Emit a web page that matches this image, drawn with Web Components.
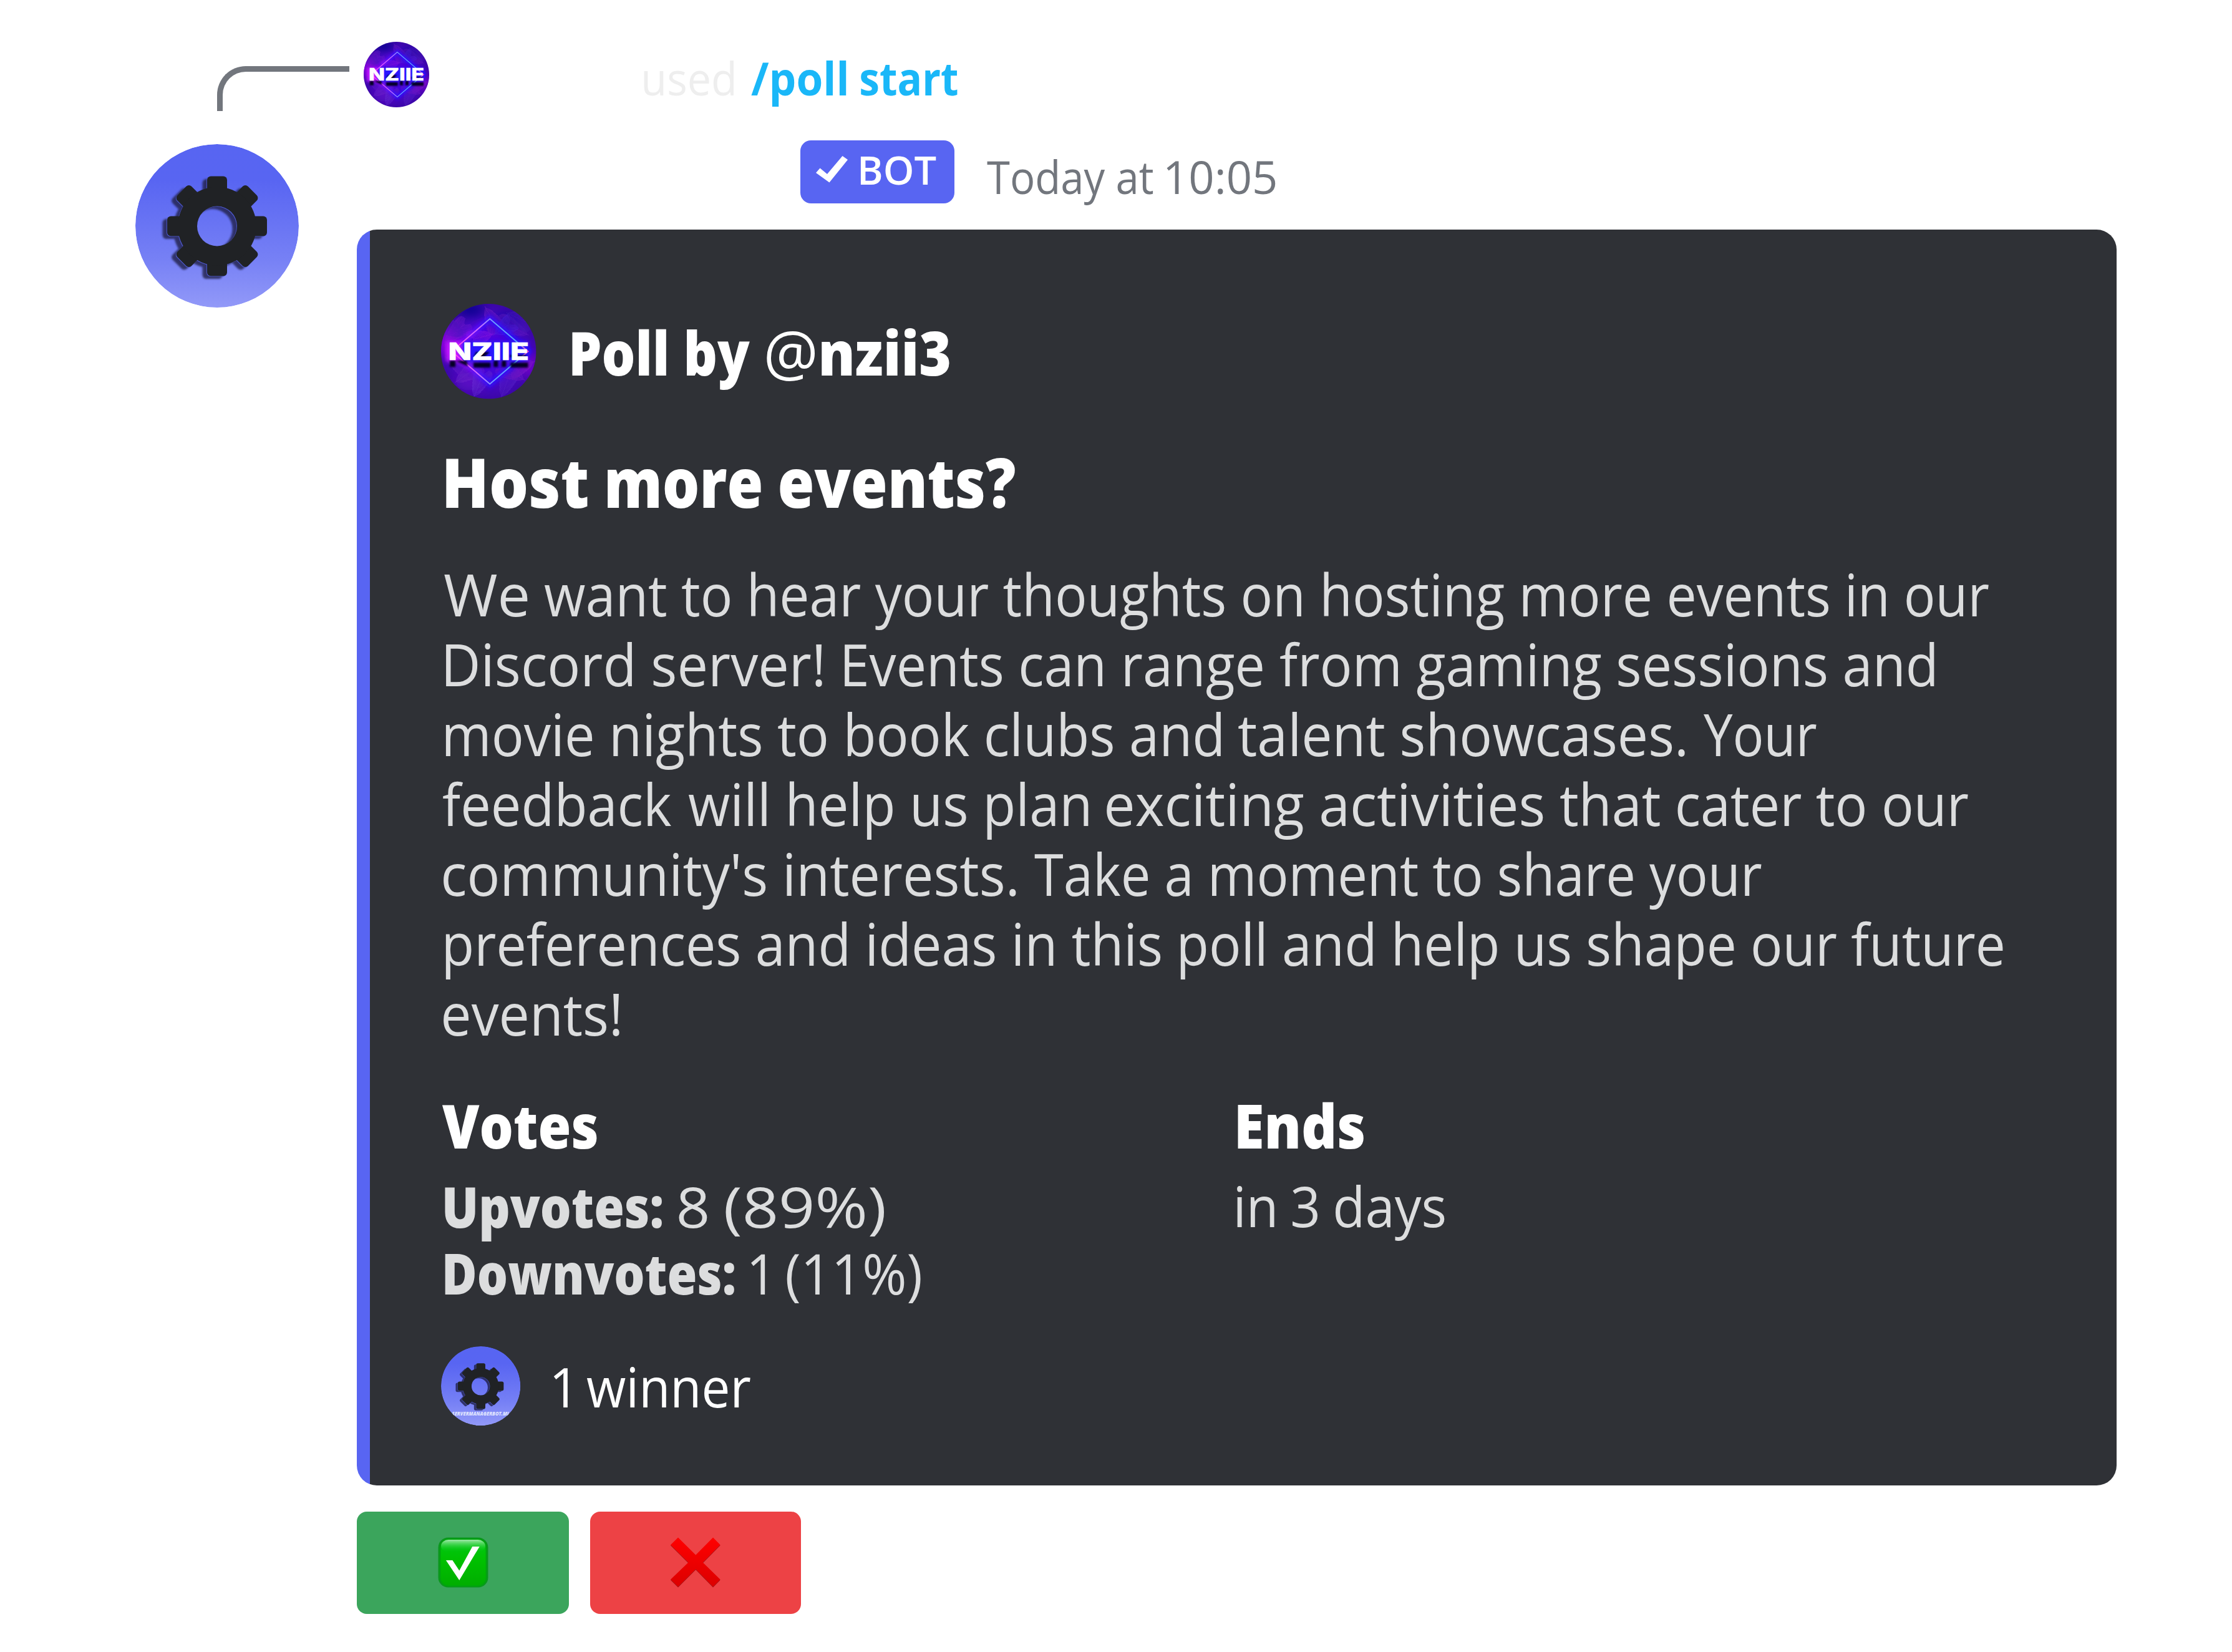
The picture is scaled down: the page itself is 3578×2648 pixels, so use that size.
<!DOCTYPE html>
<html lang="en">
<head>
<meta charset="utf-8">
<title>Poll message</title>
<style>
html,body{margin:0;padding:0;background:#fff}
body{width:3578px;height:2648px;overflow:hidden;font-family:"Open Sans","Noto Sans",sans-serif}
</style>
</head>
<body>
<poll-message></poll-message>
<script>
const meter = document.createElement('canvas').getContext('2d');

/* One line of text whose ink spans exactly `w` pixels; the baseline sits at `size` by default.
   "|" divides the line into runs; `cuts` lists "end,start" pairs for each division.
   A run that starts with "~" is drawn in the regular weight. */
class FitText extends HTMLElement {
  connectedCallback() {
    const size = +this.getAttribute('size'), w = +this.getAttribute('w');
    const base = this.getAttribute('weight') || '400';
    const lh = +(this.getAttribute('lh') || size * 1.224);
    const cuts = (this.getAttribute('cuts') || '').split(',').filter(Boolean).map(Number);
    const edges = [0, ...cuts, w];
    const runs = this.textContent.trim().split('|');
    let spans = '', cursor = 0;
    runs.forEach((raw, i) => {
      const weight = raw[0] === '~' ? '400' : base;
      const text = raw.replace('~', '').trimEnd();
      const from = edges[i * 2], to = edges[i * 2 + 1];
      meter.font = `${weight} ${size}px "Open Sans","Noto Sans",sans-serif`;
      const m = meter.measureText(text);
      const k = (to - from) / (m.actualBoundingBoxLeft + m.actualBoundingBoxRight);
      spans += `<span class="run" style="width:${to - from}px;margin-left:${from - cursor}px"><span style="font-weight:${weight};transform:translateX(${m.actualBoundingBoxLeft * k}px) scaleX(${k})">${text}</span></span>${raw.endsWith(' ') ? ' ' : ''}`;
      cursor = to;
    });
    this.attachShadow({mode: 'open'}).innerHTML = `<style>
      :host{display:block;flex:none;width:${w}px;height:${lh}px;white-space:pre;font-size:0;line-height:0;
        margin-left:${this.getAttribute('x') || 0}px;margin-top:${this.getAttribute('y') || 0}px}
      .run{display:inline-block;vertical-align:top;height:${lh}px}
      .run span{display:inline-block;font-size:${size}px;line-height:${lh}px;transform-origin:0 0}
    </style>${spans}`;
  }
}
customElements.define('fit-text', FitText);

class GearAvatar extends HTMLElement {
  connectedCallback() {
    const size = this.getAttribute('size'), k = +this.getAttribute('scale') || 1;
    let teeth = '';
    for (let a = 0; a < 360; a += 45)
      teeth += `<rect x="-16" y="-80" width="32" height="36" rx="6" transform="rotate(${a})"/>`;
    const gear = `${teeth}<path fill-rule="evenodd" d="M0-63A63 63 0 1 1 0 63A63 63 0 1 1 0-63ZM0-32A32 32 0 1 0 0 32A32 32 0 1 0 0-32Z"/>`;
    const label = this.hasAttribute('label')
      ? `<text x="36" y="228" textLength="190" lengthAdjust="spacingAndGlyphs" font-size="17" font-weight="800" font-style="italic" fill="#dfe3ff">${this.getAttribute('label')}</text>` : '';
    this.attachShadow({mode: 'open'}).innerHTML = `<style>
      :host{display:block;flex:none;width:${size}px;height:${size}px;margin-top:${this.getAttribute('y') || 0}px}
      svg{display:block;width:100%;height:100%}</style>
      <svg viewBox="0 0 262 262"><defs>
        <linearGradient id="g" x1="0" y1="0" x2="0" y2="1"><stop offset="0" stop-color="#5765f2"/><stop offset=".22" stop-color="#5865f2"/><stop offset=".7" stop-color="#7680f5"/><stop offset="1" stop-color="#9299f8"/></linearGradient>
        <filter id="b" x="-20%" y="-20%" width="140%" height="140%"><feGaussianBlur stdDeviation="1.6"/></filter>
        <clipPath id="c"><circle cx="131" cy="131" r="131"/></clipPath></defs>
        <g clip-path="url(#c)"><circle cx="131" cy="131" r="131" fill="url(#g)"/>
        <g transform="translate(131 131.5) scale(${k})">
          <g transform="translate(-7.5 4.5)" fill="#20244c" opacity=".82" filter="url(#b)">${gear}</g>
          <g transform="translate(-.8 .8)" fill="#4f5cd6">${gear}</g>
          <g fill="#202225">${gear}</g></g>${label}</g></svg>`;
  }
}
customElements.define('gear-avatar', GearAvatar);

class NeonAvatar extends HTMLElement {
  connectedCallback() {
    const size = this.getAttribute('size');
    const frond = (x, y, rot, len, colour) => {
      let d = '';
      for (let i = 3; i < len; i += 2.6) {
        const s = 17 * Math.sin(Math.PI * (i + 4) / (len + 8)) + 3;
        d += `M${i} 0q${s * .4} ${-s * .45} ${s} ${-s * .75}M${i} 0q${s * .4} ${s * .45} ${s} ${s * .75}`;
      }
      return `<path d="M0 0H${len}${d}" transform="translate(${x} ${y}) rotate(${rot})" stroke="${colour}" fill="none" stroke-width="1.1"/>`;
    };
    const fronds = frond(5,62,-42,44,'#7a1fd0') + frond(38,52,-150,36,'#5a1bc4') + frond(70,4,62,40,'#7d22c8')
      + frond(140,50,-155,50,'#6a20c0') + frond(84,48,165,34,'#a020e0') + frond(84,50,-35,30,'#5a2be0') + frond(6,84,30,40,'#6a1ec8')
      + frond(22,126,-35,44,'#7428cc') + frond(52,150,-68,42,'#6b35d8') + frond(96,150,-70,42,'#5b27c8')
      + frond(134,122,-150,42,'#7a1fc8') + frond(150,92,160,36,'#8a20c8') + frond(104,14,25,38,'#4a20b8');
    this.attachShadow({mode: 'open'}).innerHTML = `<style>
      :host{display:block;flex:none;width:${size}px;height:${size}px;margin-left:${this.getAttribute('x') || 0}px;margin-top:${this.getAttribute('y') || 0}px}
      svg{display:block;width:100%;height:100%}</style>
      <svg viewBox="0 0 152 152"><defs>
        <clipPath id="c"><circle cx="76" cy="76" r="76"/></clipPath>
        <radialGradient id="bg"><stop offset="0" stop-color="#3a00e8"/><stop offset=".6" stop-color="#4a08cc"/><stop offset="1" stop-color="#3c06a8"/></radialGradient>
        <linearGradient id="ln" x1="0" x2="1" y1="0" y2="0"><stop offset="0" stop-color="#ff3cf0"/><stop offset=".38" stop-color="#c870ff"/><stop offset=".55" stop-color="#6c9cff"/><stop offset=".85" stop-color="#5aa0ff"/><stop offset="1" stop-color="#ff50c8"/></linearGradient>
        <linearGradient id="gl" x1="0" x2="1" y1="0" y2="0"><stop offset="0" stop-color="#d000ff"/><stop offset=".45" stop-color="#3010ff"/><stop offset="1" stop-color="#1c10ff"/></linearGradient>
        <filter id="b1" x="-30%" y="-60%" width="160%" height="220%"><feGaussianBlur stdDeviation="1.4"/></filter>
        <filter id="b2" x="-30%" y="-60%" width="160%" height="220%"><feGaussianBlur stdDeviation="3.2"/></filter>
        <filter id="b3" x="-60%" y="-60%" width="220%" height="220%"><feGaussianBlur stdDeviation="9"/></filter></defs>
        <g clip-path="url(#c)">
          <rect width="152" height="152" fill="url(#bg)"/>
          <g filter="url(#b3)"><ellipse cx="48" cy="10" rx="22" ry="9" fill="#00008c"/><ellipse cx="104" cy="30" rx="18" ry="12" fill="#0a00a0"/><ellipse cx="10" cy="62" rx="16" ry="24" fill="#8c00e0"/><ellipse cx="140" cy="96" rx="12" ry="22" fill="#7800cc"/><ellipse cx="46" cy="124" rx="24" ry="14" fill="#5c10c4"/><ellipse cx="80" cy="50" rx="26" ry="14" fill="#5000dc"/></g>
          <g opacity=".5">${fronds}</g>
          <path d="M78 24L17 76L78 128L139 76Z" fill="none" stroke="url(#gl)" stroke-width="11" opacity=".8" filter="url(#b2)"/>
          <g filter="url(#b2)"><rect x="12" y="60" width="128" height="32" fill="#2a18ff"/><rect x="8" y="60" width="24" height="32" fill="#c018ff"/></g>
          <path d="M78 24L17 76L78 128L139 76Z" fill="none" stroke="url(#ln)" stroke-width="2"/>
          <g fill="#05031c" opacity=".95" filter="url(#b1)"><path d="M14 91h9v10h-9zM23 91l18 0 2 9zM52 94h27v8h-27zM84 91h7v10h-7zM97 91h7v10h-7zM111 94h28v8h-28zM56 77h22l-10 9h-16zM110 82h26v3h-26z"/></g>
          <text x="11.5" y="90" textLength="129" lengthAdjust="spacingAndGlyphs" font-size="38.5" font-family="Inter,sans-serif" font-weight="800" fill="#fff" stroke="#fff" stroke-width=".6">NZIIE</text>
        </g></svg>`;
  }
}
customElements.define('neon-avatar', NeonAvatar);

class BotTag extends HTMLElement {
  connectedCallback() {
    this.attachShadow({mode: 'open'}).innerHTML = `<style>
      :host{display:flex;flex:none;box-sizing:border-box;width:247px;height:101px;padding-left:25.5px;background:#5865f2;border-radius:17px;color:#fff}
      svg{display:block;flex:none;width:51px;height:43px;margin-top:25px}</style>
      <svg viewBox="0 0 51 43"><path d="M0 27L6.5 19.5L18 29L42.5 0L51 6L21.5 42.5Z" fill="#fff"/></svg><slot></slot>`;
  }
}
customElements.define('bot-tag', BotTag);

class ReplyLine extends HTMLElement {
  connectedCallback() {
    this.attachShadow({mode: 'open'}).innerHTML = `<style>
      :host{display:flex;height:225px;padding-left:348px}
      .spine{box-sizing:border-box;flex:none;width:212px;height:72px;margin-top:106.3px;border:solid #72767d;border-width:9px 0 0 9px;border-top-left-radius:46px}
      .used{color:#eee}.cmd{color:#1ab7f8}</style>
      <div class="spine"></div><neon-avatar size="105" x="23" y="66.7"></neon-avatar>
      <fit-text class="used" size="73" w="144.5" x="343.5" y="80">used</fit-text>
      <fit-text class="cmd" size="73" weight="700" w="331" x="28" y="80" cuts="152.5,176">/poll |start</fit-text>`;
  }
}
customElements.define('reply-line', ReplyLine);

class PollEmbed extends HTMLElement {
  connectedCallback() {
    /* left edge, right edge, text, division edges */
    const lines = [
      [712, 3188, 'We |want to hear your thoughts on hosting more events |in our', [846, 873, 2932, 2963]],
      [715, 3100.4, 'Discord server! |Events can range |from gaming sessions and', [1318, 1354, 2024, 2052]],
      [714, 2911.8, 'movie nights to book clubs and |talent showcases. |Your', [1957, 1985, 2701, 2731]],
      [710, 3155, 'feedback |will help us plan |exciting activities |that cater to our', [1076.7, 1104, 1745, 1774, 2474, 2501]],
      [711.3, 2823.7, "community's interests. |Take a moment to share your", [1629, 1658]],
      [714, 3211, 'preferences and ideas in this |poll and help us shape our future', [1861, 1892]],
      [711.3, 993.3, 'events!', []]];
    this.attachShadow({mode: 'open'}).innerHTML = `<style>
      :host{display:flex;flex-direction:column;box-sizing:border-box;width:2821px;height:2012.7px;padding:119px 0 0 134.9px;border-radius:32px;
        background:linear-gradient(90deg,#5865f2 21px,#2f3136 21px);color:#fff}
      .row{display:flex}.body,.values{color:#dcddde}.body{margin-top:57px}
      .fields{display:grid;grid-template-columns:1275.3px 1fr;margin-top:63.7px}
      .footer{display:flex;margin-top:63.4px}</style>
      <div class="row"><neon-avatar size="152.5"></neon-avatar><fit-text size="98" weight="800" w="605" x="57" y="18.3" cuts="285,312,390,400">Poll by |~@|nzii3</fit-text></div>
      <fit-text size="110" weight="800" w="912" x="7.6" y="64.4" cuts="227,259,505,535">Host |more |events?</fit-text>
      <div class="body">${lines.map(([l, r, t, c]) => `<fit-text size="93" lh="112" w="${r - l}" x="${l - 707.4}" cuts="${c.map(v => v - l)}">${t}</fit-text>`).join('')}</div>
      <div class="fields">
        <section><fit-text size="98" weight="800" w="247.5" x="1.8" y="1">Votes</fit-text>
          <div class="values"><div class="row"><fit-text size="90" lh="107.2" weight="800" w="348.5" x="5.3" y="16">Upvotes:</fit-text><fit-text size="90" lh="107.2" w="329" x="27" y="16" cuts="45.5,75">8 |(89%)</fit-text></div>
          <div class="row"><fit-text size="90" lh="107.2" weight="800" w="464.5" x="5.3">Downvotes:</fit-text><fit-text size="90" lh="107.2" w="272" x="26.5" cuts="22.5,57.5">1 |(11%)</fit-text></div></div></section>
        <section><fit-text size="98" weight="800" w="202" x="1" y="1">Ends</fit-text>
          <div class="values"><fit-text size="90" lh="107.2" w="332.5" x=".5" y="14.6" cuts="59.6,89.3,130,158">in |3 |days</fit-text></div></section>
      </div>
      <div class="footer"><gear-avatar size="127.3" scale=".945" label="SERVERMANAGERBOT.ML"></gear-avatar><fit-text size="88" w="316" x="52.5" y="11" cuts="23,54">1 |winner</fit-text></div>`;
  }
}
customElements.define('poll-embed', PollEmbed);

class VoteButton extends HTMLElement {
  connectedCallback() {
    const up = this.getAttribute('kind') === 'up';
    const icon = up ? `<svg viewBox="0 0 81 81"><defs>
        <linearGradient id="f" x1="0" y1="0" x2="0" y2="1"><stop offset="0" stop-color="#00c814"/><stop offset=".45" stop-color="#00c000"/><stop offset="1" stop-color="#00ae00"/></linearGradient>
        <linearGradient id="s" x1="0" y1="0" x2="0" y2="1"><stop offset="0" stop-color="#a4e8ac"/><stop offset="1" stop-color="#00c814" stop-opacity="0"/></linearGradient></defs>
        <rect x=".5" y=".5" width="80" height="80" rx="16" fill="#0a981c"/><rect x="3" y="2.5" width="75" height="76.5" rx="14" fill="#00a60c"/>
        <rect x="4.5" y="4" width="72" height="73" rx="12.5" fill="url(#f)"/><rect x="5" y="4" width="71" height="20" rx="12" fill="url(#s)"/>
        <path d="M12.9 37H23.4L34.3 53.5L55.2 15H66.7L34.3 69Z" fill="#fff"/></svg>`
      : `<svg viewBox="0 0 81 81"><defs><linearGradient id="x" x1="0" y1="0" x2="0" y2="1"><stop offset="0" stop-color="#ff0000"/><stop offset="1" stop-color="#dc0000"/></linearGradient></defs>
        <path d="M12 1.5L0 13.2L28.4 41.5L0 68.8L12 80.5L40.3 52.2L68 80.5L79.6 68.8L51.7 41.5L79.6 13.2L68 1.5L40.3 29.5Z" fill="#a01418"/>
        <path d="M12 .5L0 12.2L28.4 40.5L0 67.8L12 79.5L40.3 51.2L68 79.5L79.6 67.8L51.7 40.5L79.6 12.2L68 .5L40.3 28.5Z" fill="url(#x)"/></svg>`;
    this.attachShadow({mode: 'open'}).innerHTML = `<style>
      :host{display:flex;flex:none;align-items:center;justify-content:center;width:${up ? 339.7 : 338}px;height:164px;border-radius:16px;background:${up ? '#3ba55c' : '#ed4245'}}
      svg{display:block;width:81px;height:81px}</style>${icon}`;
  }
}
customElements.define('vote-button', VoteButton);

class PollMessage extends HTMLElement {
  connectedCallback() {
    this.attachShadow({mode: 'open'}).innerHTML = `<style>
      :host{display:flex;flex-direction:column;width:3578px}
      .main{display:flex;gap:93.4px;padding-left:217px}
      .head{display:flex;height:143px;padding-left:710.6px}
      .time{color:#72767d}
      .buttons{display:flex;gap:34px;margin-top:42.3px}</style>
      <reply-line></reply-line>
      <div class="main"><gear-avatar size="262" y="6"></gear-avatar>
        <div><div class="head"><bot-tag><fit-text size="64" weight="600" w="121" x="20.5" y="7.6">BOT</fit-text></bot-tag><fit-text class="time" size="72.5" w="463" x="52" y="13.6" cuts="267,288">Today at |10:05</fit-text></div>
          <poll-embed></poll-embed>
          <div class="buttons"><vote-button kind="up"></vote-button><vote-button kind="down"></vote-button></div></div></div>`;
  }
}
customElements.define('poll-message', PollMessage);
</script>
</body>
</html>
